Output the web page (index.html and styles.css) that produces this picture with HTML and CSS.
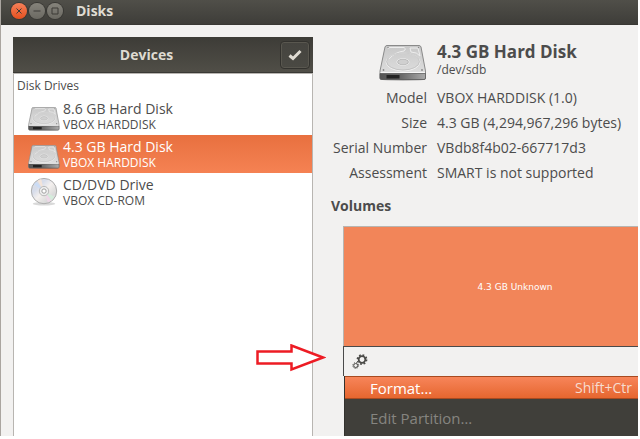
FILE: index.html
```html
<!DOCTYPE html>
<html lang="en">
<head>
<meta charset="utf-8">
<title>Disks</title>
<link rel="stylesheet" href="styles.css">
</head>
<body>
<svg class="defs" aria-hidden="true">
  <defs>
    <linearGradient id="lid" x1="0" y1="0" x2="0" y2="1"><stop offset="0" stop-color="#c8c8c8"/><stop offset="1" stop-color="#e2e2e2"/></linearGradient>
    <linearGradient id="front" x1="0" y1="0" x2="1" y2="0"><stop offset="0" stop-color="#555"/><stop offset=".45" stop-color="#666"/><stop offset="1" stop-color="#aaa"/></linearGradient>
    <linearGradient id="disc" x1="0" y1="0" x2="1" y2="1"><stop offset="0" stop-color="#ddd"/><stop offset=".3" stop-color="#d6dcea"/><stop offset=".5" stop-color="#f4f0ee"/><stop offset=".75" stop-color="#dadada"/><stop offset="1" stop-color="#e8e8e8"/></linearGradient>
    <symbol id="hdd" viewBox="0 0 48 36">
      <ellipse cx="24" cy="34.500" rx="22" ry="1.500" fill="#000" opacity=".2"/>
      <path d="M8 .5h32q1.500 0 2 1.500L46.500 26v7q0 1.500-1.500 1.500H2.500Q1 34.500 1 33v-7L6 2Q6.500.5 8 .5z" fill="url(#lid)" stroke="#8a8a8a"/>
      <path d="M1 28.500h45.500V33q0 1.500-1.500 1.500H2.500Q1 34.500 1 33z" fill="url(#front)" stroke="#555" stroke-width=".7"/>
      <path d="M7.500 30h13v3.500h-13z" fill="#222"/>
      <path d="M1.500 27.500h44.500" stroke="#f7f7f7"/>
      <path d="M9 4q0-1.500 2-1.500h14q3 1 0 3.500-9 1-15 8M31 3h8l2 8q-3-4-9-4z" fill="none" stroke="#ededed"/>
      <ellipse cx="24" cy="17" rx="17" ry="9" fill="none" stroke="#f0f0f0"/>
      <ellipse cx="24" cy="16.500" rx="16.500" ry="8.500" fill="none" stroke="#b4b4b4" stroke-width=".6"/>
      <ellipse cx="24" cy="17" rx="6" ry="3.300" fill="#d0d0d0" stroke="#f4f4f4"/>
      <ellipse cx="24" cy="17" rx="5.400" ry="2.800" fill="none" stroke="#a5a5a5" stroke-width=".6"/>
      <g fill="#888"><circle cx="9" cy="2.500" r=".7"/><circle cx="39.500" cy="2.500" r=".7"/><circle cx="4.500" cy="25" r=".9"/><circle cx="43" cy="25" r=".9"/></g>
    </symbol>
    <symbol id="cd" viewBox="0 0 32 32">
      <ellipse cx="16" cy="28.500" rx="12" ry="2" fill="#000" opacity=".15"/>
      <circle cx="16" cy="15" r="13.500" fill="url(#disc)" stroke="#aaa"/>
      <path d="M16 15L5 8l3-3z" fill="#cbdcf5"/><path d="M16 15L9 4l4-2z" fill="#f3e4da"/>
      <path d="M16 15l11 6-3 4z" fill="#d5ecdc"/><path d="M16 15l8 10-4 2z" fill="#eed8e8"/>
      <circle cx="16" cy="15" r="5" fill="#eee" stroke="#b5b5b5"/>
      <circle cx="16" cy="15" r="2.300" fill="#fff" stroke="#999"/>
    </symbol>
  </defs>
</svg>
<div class="window">
  <header class="titlebar">
    <div class="controls">
      <button class="control close" aria-label="Close"><svg viewBox="0 0 16 16"><path d="M5.500 5.500l5 5M10.500 5.500l-5 5"/></svg></button>
      <button class="control" aria-label="Minimize"><svg viewBox="0 0 16 16"><path d="M4.500 8h7"/></svg></button>
      <button class="control" aria-label="Maximize"><svg viewBox="0 0 16 16"><path d="M5 5h6v6H5z"/></svg></button>
    </div>
    <h1>Disks</h1>
  </header>
  <main class="content">
    <section class="devices">
      <header class="devices-header">
        <h2>Devices</h2>
        <button class="check" aria-label="Select devices"><svg viewBox="0 0 14 12"><path d="M1.500 6.500L5 9.500l7.500-7.500"/></svg></button>
      </header>
      <div class="device-list">
        <h3>Disk Drives</h3>
        <ul>
          <li class="device"><svg class="drive"><use href="#hdd"/></svg><p>8.6 GB Hard Disk<small>VBOX HARDDISK</small></p></li>
          <li class="device selected"><svg class="drive"><use href="#hdd"/></svg><p>4.3 GB Hard Disk<small>VBOX HARDDISK</small></p></li>
          <li class="device"><svg class="drive disc"><use href="#cd"/></svg><p>CD/DVD Drive<small>VBOX CD-ROM</small></p></li>
        </ul>
      </div>
    </section>
    <section class="details">
      <div class="summary">
        <svg class="summary-icon"><use href="#hdd"/></svg>
        <div><h2>4.3 GB Hard Disk</h2><p>/dev/sdb</p></div>
      </div>
      <dl>
        <dt>Model</dt><dd>VBOX HARDDISK (1.0)</dd>
        <dt>Size</dt><dd>4.3 GB (4,294,967,296 bytes)</dd>
        <dt>Serial Number</dt><dd>VBdb8f4b02-667717d3</dd>
        <dt>Assessment</dt><dd>SMART is not supported</dd>
      </dl>
      <h3>Volumes</h3>
      <div class="volumes">
        <div class="volume">4.3 GB Unknown</div>
        <div class="toolbar">
          <button class="gear" aria-label="Volume actions">
            <svg viewBox="0 0 16 16"><circle cx="10" cy="5.500" r="3.300" stroke-width="1.800"/><circle cx="10" cy="5.500" r="4.600" stroke-width="1.600" stroke-dasharray="1.800 1.810"/><circle cx="3.700" cy="11.500" r="2" stroke-width="1"/><circle cx="3.700" cy="11.500" r="2.900" stroke-width="1" stroke-dasharray="1.100 1.177"/></svg>
          </button>
        </div>
        <div class="menu" role="menu">
          <button class="item active" role="menuitem"><span>Format…</span><kbd>Shift+Ctr</kbd></button>
          <button class="item" role="menuitem" disabled><span>Edit Partition…</span></button>
        </div>
      </div>
    </section>
  </main>
  <svg class="arrow" viewBox="0 0 70 28" aria-hidden="true"><path d="M1.500 7.500h34v-6L67 13.500 35.500 25.500v-6h-34z"/></svg>
</div>
</body>
</html>
```
FILE: styles.css
```css
* { box-sizing: border-box; }
body {
  margin: 0;
  padding: 0 2px 3px 0;
  height: 100vh;
  overflow: hidden;
  background: #fff;
  color: #4c4c4c;
  font: 14px/18px "Open Sans", "Noto Sans", sans-serif;
}
h1, h2, h3, p, ul, dl, dd { margin: 0; padding: 0; }
ul { list-style: none; }
button { font: inherit; color: inherit; border: 0; padding: 0; background: none; }
.defs { position: absolute; width: 0; height: 0; }
.window {
  position: relative;
  display: flex;
  flex-direction: column;
  height: 100%;
  overflow: hidden;
  background: #f2f1f0;
  border-left: 1px solid #aaa5a0;
}
.titlebar {
  flex: none;
  display: flex;
  align-items: center;
  gap: 13px;
  height: 25px;
  padding: 0 10px 2px;
  background: linear-gradient(#504f49, #3e3d39);
  border-bottom: 1px solid #393834;
  color: #dfdbd2;
}
.titlebar h1 { font-size: 14px; }
.controls { display: flex; gap: 2px; }
.control {
  width: 16px;
  height: 16px;
  border-radius: 50%;
  background: linear-gradient(#85837b, #6b6962);
  box-shadow: 0 0 0 1px #393834;
}
.control svg { display: block; fill: none; stroke: #3c3b37; stroke-width: 1; }
.close { background: linear-gradient(#f58059, #e4501f); }
.content { flex: 1; display: flex; gap: 18px; min-height: 0; padding: 12px 0 0 12px; }
.devices { flex: 0 0 300px; display: flex; flex-direction: column; }
.devices-header {
  display: flex;
  align-items: center;
  height: 36px;
  padding-right: 3px;
  background: linear-gradient(#3d3c37, #504e47);
  border-bottom: 1px solid #3a3935;
  color: #dfdbd2;
}
.devices-header h2 { flex: 1; font-size: 14px; text-align: center; }
.check {
  display: grid;
  place-items: center;
  width: 30px;
  height: 28px;
  border: 1px solid #33322e;
  border-radius: 4px;
  background: linear-gradient(#45443f, #4a4943);
  box-shadow: inset 0 0 0 1px #59574f;
}
.check svg { width: 14px; fill: none; stroke: #dfdbd2; stroke-width: 3; }
.device-list { flex: 1; border: 1px solid #b8b5b1; border-bottom: 0; background: #fff; }
.device-list h3 { padding: 3px; font-size: 12px; font-weight: 400; line-height: 17px; }
.device { display: flex; align-items: center; gap: 3px; height: 38px; padding-left: 14px; }
.device p { line-height: 17px; }
.device small { display: block; font-size: 12px; line-height: 15px; }
.selected { background: linear-gradient(#e8703f, #f58253); color: #fff; }
.drive { width: 32px; height: 24px; margin-top: 5px; }
.disc { height: 30px; margin-top: 0; }
.details { flex: 1 0 356px; }
.summary { display: flex; gap: 10px; margin-top: 5px; height: 43px; }
.summary-icon { width: 48px; height: 36px; margin: 3px 0 0 48px; }
.summary h2 { font-size: 17px; line-height: 20px; }
.summary p { font-size: 12px; line-height: 16px; }
dl { display: grid; grid-template-columns: 96px 1fr; column-gap: 10px; line-height: 25px; white-space: nowrap; }
dt { text-align: right; }
.details h3 { margin: 12px 0 11px; font-size: 14px; }
.volumes { margin-left: 12px; }
.volume {
  display: grid;
  place-items: center;
  height: 120px;
  border: 1px solid #b8b5b1;
  border-bottom: 0;
  background: #f28559;
  color: #fff;
  font: 9px/12px "DejaVu Sans", sans-serif;
}
.toolbar { height: 30px; padding: 7px 8px; border: solid #4a4a4a; border-width: 1px 0 0 1px; background: #f2f1f0; }
.gear { display: block; width: 16px; height: 16px; }
.gear svg { display: block; fill: none; stroke: #4a4a47; }
.menu {
  margin-left: 1px;
  height: 80px;
  border-left: 1px solid #33322e;
  background: #403f3a;
  color: #868580;
  font-size: 15px;
}
.item { display: flex; width: 100%; padding: 2px 0 3px 25px; line-height: 18px; }
.item span { width: 205px; text-align: left; }
.item kbd { font: inherit; font-size: 14px; color: #f6dcd0; }
.item + .item { margin-top: 8px; }
.active {
  background: linear-gradient(#f7855a, #e6662f);
  border: solid #a84a20;
  border-width: 1px 0;
  color: #fff;
}
.item.active { padding-bottom: 1px; }
.arrow { position: absolute; left: 255px; top: 344px; width: 70px; height: 28px; fill: #fff; stroke: #ed1c24; stroke-width: 2.5; }
```
